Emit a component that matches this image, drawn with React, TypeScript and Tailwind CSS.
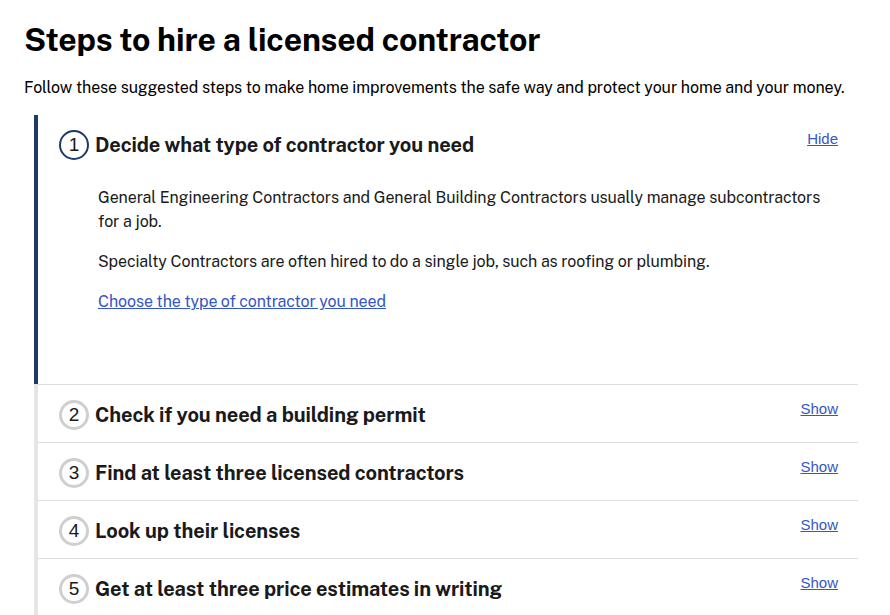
const steps = [
  "Decide what type of contractor you need",
  "Check if you need a building permit",
  "Find at least three licensed contractors",
  "Look up their licenses",
  "Get at least three price estimates in writing",
];

function StepNumber({ n, open }: { n: number; open: boolean }) {
  return (
    <span
      className={`flex h-[30px] w-[30px] shrink-0 items-center justify-center rounded-full font-['Liberation_Sans',Arial,sans-serif] text-[19px] text-[#1a1a1a] ${
        open ? "border-2 border-[#1d3a6b]" : "border-[3px] border-[#cfcfcf]"
      }`}
    >
      {n}
    </span>
  );
}

export default function App() {
  return (
    <div className="min-h-screen bg-white px-6 pt-[20px] font-['Public_Sans',Inter,sans-serif] text-[#1a1a1a]">
      <h1 className="text-[32px] font-bold leading-[40px] tracking-[-0.15px] text-black">
        Steps to hire a licensed contractor
      </h1>
      <p className="mt-[16px] text-[16px] leading-6 tracking-[-0.1px] text-black">
        Follow these suggested steps to make home improvements the safe way and protect your home and your money.
      </p>

      <div className="ml-[10px] mt-[15px] w-[824px]">
        {steps.map((title, i) => {
          const open = i === 0;
          return (
            <div key={title} className={`border-l-4 ${open ? "border-[#1d3a6b]" : "border-[#e6e6e6]"}`}>
              <div className={`pr-5 ${i > 0 ? "border-t border-[#dedede]" : ""}`}>
                <div className="flex items-start justify-between pl-[21px] pt-[15px]">
                  <div className="flex items-center gap-[6px]">
                    <StepNumber n={i + 1} open={open} />
                    <h2 className="text-[20px] font-bold leading-[28px] tracking-[-0.1px]">{title}</h2>
                  </div>
                  <a
                    href="#"
                    className="-mt-[2px] font-['Liberation_Sans',Arial,sans-serif] text-[15px] text-[#3456c6] underline"
                  >
                    {open ? "Hide" : "Show"}
                  </a>
                </div>
                {open ? (
                  <div className="pb-[70px] pl-[60px] pt-[26px] text-[16px] leading-6 tracking-[-0.1px]">
                    <p>
                      General Engineering Contractors and General Building Contractors usually manage subcontractors
                      for a job.
                    </p>
                    <p className="mt-4">Specialty Contractors are often hired to do a single job, such as roofing or plumbing.</p>
                    <p className="mt-4">
                      <a href="#" className="text-[#3456c6] underline">
                        Choose the type of contractor you need
                      </a>
                    </p>
                  </div>
                ) : (
                  <div className="h-[12px]" />
                )}
              </div>
            </div>
          );
        })}
      </div>
    </div>
  );
}
